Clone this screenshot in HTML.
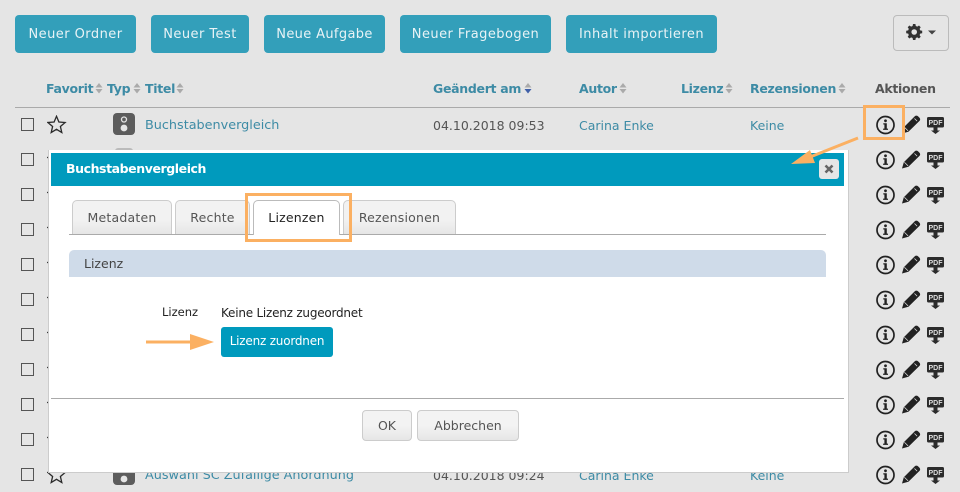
<!DOCTYPE html>
<html lang="de"><head><meta charset="utf-8"><title>Inhalte</title>
<style>
html,body{margin:0;padding:0}
body{width:960px;height:492px;background:#e5e5e5;position:relative;overflow:hidden;font-family:"DejaVu Sans","Liberation Sans",sans-serif;font-size:13px;color:#555}
.a{position:absolute;white-space:nowrap}
.btn{position:absolute;top:15px;height:38px;line-height:40px;background:#339fba;color:#e8f3f6;border-radius:4px;text-align:center;font-size:13px;letter-spacing:.45px}
.th{position:absolute;top:81px;line-height:16px;font-weight:bold;color:#3d8ba5;font-size:12.5px;letter-spacing:-.3px;white-space:nowrap}
.sort{position:absolute;top:83px}
.cb{position:absolute;left:21px;width:11px;height:11px;border:1px solid #555}
.ic{position:absolute;left:875px}
.star{position:absolute;left:47px}
.td{position:absolute;line-height:18px;white-space:nowrap;color:#3d8ba5}
.tab{position:absolute;top:200px;height:34px;line-height:34px;text-align:center;border:1px solid #ccc;border-bottom:0;border-radius:5px 5px 0 0;background:linear-gradient(#f2f2f2 55%,#e6e6e6);color:#555;box-sizing:border-box;font-size:12.5px;letter-spacing:.2px}
.mb{position:absolute;top:410px;height:31px;line-height:29px;text-align:center;box-sizing:border-box;border:1px solid #ccc;border-radius:4px;background:linear-gradient(#f3f3f3 50%,#e6e6e6);color:#555;font-size:12.5px}
</style></head><body>
<svg width="0" height="0" style="position:absolute"><defs>
<g id="acts">
<circle cx="10.500" cy="10" r="8.500" fill="none" stroke="#222" stroke-width="1.700"/>
<circle cx="10.500" cy="5.800" r="1.400" fill="#222"/>
<path d="M8.300 8.200h3.500v5.400h1.200v1.300H8.100v-1.300h1.300V9.500H8.300z" fill="#222"/>
<path d="M27 18.500l1.800-6.300L39.800 1.300c.9-.9 2.200-.9 3.200 0l1.500 1.500c.9 1 .9 2.200 0 3.100L33.400 16.800z" fill="#222"/>
<path d="M29.400 12.200l3.700 3.700M39.500 3.500l2.600 2.600" stroke="#e5e5e5" stroke-width=".7" fill="none"/>
<rect x="52" y="2" width="17" height="10.500" rx="1.500" fill="#2b2b2b"/>
<text x="60.500" y="9.800" font-family="Liberation Sans" font-size="7" font-weight="bold" fill="#ddd" text-anchor="middle">PDF</text>
<path d="M58.500 12.500h4v3h2.500L60.500 19l-4.500-3.500h2.500z" fill="#2b2b2b"/>
</g>
<path id="st" d="M9.500 1.300l2.400 5.700 6.200.5-4.700 4 1.400 6-5.300-3.200-5.300 3.200 1.400-6-4.700-4 6.200-.5z" fill="none" stroke="#2a2a2a" stroke-width="1.300"/>
<g id="srt"><path d="M4 0l3.500 4.500H.5z" fill="#aaa"/><path d="M.5 6h7L4 10.500z" fill="#aaa"/></g>
</defs></svg>

<div class="btn" style="left:15px;width:121px">Neuer Ordner</div>
<div class="btn" style="left:151px;width:98px">Neuer Test</div>
<div class="btn" style="left:264px;width:121px;letter-spacing:.35px">Neue Aufgabe</div>
<div class="btn" style="left:400px;width:151px">Neuer Fragebogen</div>
<div class="btn" style="left:566px;width:151px">Inhalt importieren</div>

<div class="a" style="left:893px;top:15px;width:54px;height:34px;border:1px solid #bbb;border-radius:4px"></div>
<svg class="a" style="left:905px;top:23px" width="34" height="18"><path d="M8 1h2.400l.4 2 1.500.6 1.700-1.100 1.700 1.700-1.100 1.700.6 1.500 2 .4v2.400l-2 .4-.6 1.500 1.100 1.700-1.700 1.700-1.700-1.100-1.500.6-.4 2H8l-.4-2-1.500-.6-1.700 1.100-1.700-1.700 1.100-1.700-.6-1.500-2-.4V7.800l2-.4.6-1.500-1.100-1.700 1.700-1.700 1.700 1.100 1.500-.6z" fill="#333"/><circle cx="9.200" cy="9" r="2.800" fill="#e5e5e5"/><path d="M23 7.500h8l-4 4z" fill="#444"/></svg>

<div class="th" style="left:46px">Favorit</div><svg class="sort" style="left:95px" width="8" height="11"><use href="#srt"/></svg>
<div class="th" style="left:107px">Typ</div><svg class="sort" style="left:133px" width="8" height="11"><use href="#srt"/></svg>
<div class="th" style="left:145px">Titel</div><svg class="sort" style="left:176px" width="8" height="11"><use href="#srt"/></svg>
<div class="th" style="left:433px">Geändert am</div><svg class="sort" style="left:524px" width="8" height="11"><path d="M4 0l3.500 4.500H.5z" fill="#aaa"/><path d="M.5 6h7L4 10.500z" fill="#3f5fa8"/></svg>
<div class="th" style="left:579px">Autor</div><svg class="sort" style="left:619px" width="8" height="11"><use href="#srt"/></svg>
<div class="th" style="left:681px">Lizenz</div><svg class="sort" style="left:725px" width="8" height="11"><use href="#srt"/></svg>
<div class="th" style="left:750px">Rezensionen</div><svg class="sort" style="left:838px" width="8" height="11"><use href="#srt"/></svg>
<div class="th" style="left:875px;color:#555">Aktionen</div>
<div class="a" style="left:15px;top:107px;width:935px;height:1px;background:#aaa"></div>

<div class="cb" style="top:118px"></div><div class="cb" style="top:153px"></div><div class="cb" style="top:188px"></div><div class="cb" style="top:223px"></div><div class="cb" style="top:258px"></div><div class="cb" style="top:293px"></div><div class="cb" style="top:328px"></div><div class="cb" style="top:363px"></div><div class="cb" style="top:398px"></div><div class="cb" style="top:433px"></div><div class="cb" style="top:468px"></div>

<svg class="star" style="top:115px" width="20" height="20"><use href="#st"/></svg>
<svg class="star" style="top:465px" width="20" height="20"><use href="#st"/></svg>
<svg class="star" style="top:150px" width="20" height="20"><use href="#st"/></svg>
<svg class="star" style="top:185px" width="20" height="20"><use href="#st"/></svg>
<svg class="star" style="top:220px" width="20" height="20"><use href="#st"/></svg>
<svg class="star" style="top:255px" width="20" height="20"><use href="#st"/></svg>
<svg class="star" style="top:290px" width="20" height="20"><use href="#st"/></svg>
<svg class="star" style="top:325px" width="20" height="20"><use href="#st"/></svg>
<svg class="star" style="top:360px" width="20" height="20"><use href="#st"/></svg>
<svg class="star" style="top:395px" width="20" height="20"><use href="#st"/></svg>
<svg class="star" style="top:430px" width="20" height="20"><use href="#st"/></svg>

<svg class="a" style="left:113px;top:113px" width="22" height="22"><rect width="22" height="22" rx="4" fill="#5c5c5c"/><circle cx="11" cy="6.500" r="2.500" fill="none" stroke="#e5e5e5" stroke-width="1.300"/><circle cx="11" cy="15" r="3.400" fill="#e5e5e5"/></svg>
<div class="a" style="left:115px;top:148px;width:18px;height:4px;background:#bbb;border-radius:3px 3px 0 0"></div>
<svg class="a" style="left:113px;top:463px" width="22" height="22"><rect width="22" height="22" rx="4" fill="#5c5c5c"/><circle cx="11" cy="16" r="3.400" fill="#e5e5e5"/></svg>

<div class="td" style="left:145px;top:117px;font-size:12.800px">Buchstabenvergleich</div>
<div class="td" style="left:433px;top:117px;color:#555;font-size:12.500px">04.10.2018 09:53</div>
<div class="td" style="left:579px;top:117px;font-size:12.500px">Carina Enke</div>
<div class="td" style="left:750px;top:117px;font-size:12.500px">Keine</div>
<div class="td" style="left:145px;top:467px;font-size:12.800px">Auswahl SC Zufällige Anordnung</div>
<div class="td" style="left:433px;top:467px;color:#555;font-size:12.500px">04.10.2018 09:24</div>
<div class="td" style="left:579px;top:467px;font-size:12.500px">Carina Enke</div>
<div class="td" style="left:750px;top:467px;font-size:12.500px">Keine</div>

<svg class="ic" style="top:115px" width="72" height="20"><use href="#acts"/></svg>
<svg class="ic" style="top:150px" width="72" height="20"><use href="#acts"/></svg>
<svg class="ic" style="top:185px" width="72" height="20"><use href="#acts"/></svg>
<svg class="ic" style="top:220px" width="72" height="20"><use href="#acts"/></svg>
<svg class="ic" style="top:255px" width="72" height="20"><use href="#acts"/></svg>
<svg class="ic" style="top:290px" width="72" height="20"><use href="#acts"/></svg>
<svg class="ic" style="top:325px" width="72" height="20"><use href="#acts"/></svg>
<svg class="ic" style="top:360px" width="72" height="20"><use href="#acts"/></svg>
<svg class="ic" style="top:395px" width="72" height="20"><use href="#acts"/></svg>
<svg class="ic" style="top:430px" width="72" height="20"><use href="#acts"/></svg>
<svg class="ic" style="top:465px" width="72" height="20"><use href="#acts"/></svg>

<!-- modal -->
<div class="a" style="left:48px;top:150px;width:799px;height:322px;background:#fff;border-left:1px solid #ccc;border-right:1px solid #ccc;border-bottom:1px solid #ccc"></div>
<div class="a" style="left:51px;top:153px;width:793px;height:33px;background:#009abd"></div>
<div class="a" style="left:66px;top:160px;color:#fff;font-weight:bold;font-size:12.500px;line-height:18px;letter-spacing:-.42px">Buchstabenvergleich</div>
<div class="a" style="left:819px;top:159px;width:20px;height:20px;background:#e6e6e6;border-radius:3px"></div>
<svg class="a" style="left:824px;top:164px" width="10" height="10"><path d="M1.500 1.500l7 7M8.500 1.500l-7 7" stroke="#666" stroke-width="2.600"/></svg>

<div class="a" style="left:69px;top:234px;width:757px;height:1px;background:#aaa"></div>
<div class="tab" style="left:72px;width:100px">Metadaten</div>
<div class="tab" style="left:175px;width:75px">Rechte</div>
<div class="tab" style="left:253px;width:87px;height:35px;background:#fff;color:#222;border-color:#bbb">Lizenzen</div>
<div class="tab" style="left:343px;width:113px">Rezensionen</div>
<div class="a" style="left:245px;top:193px;width:101px;height:43px;border:3px solid #fbb062;background:transparent"></div>

<div class="a" style="left:69px;top:250px;width:757px;height:27px;line-height:27px;background:#cfdbe9;border-radius:5px 5px 0 0;color:#444;text-indent:15px;font-size:12.500px">Lizenz</div>
<div class="a" style="left:162px;top:303px;color:#222;font-size:11.500px;line-height:18px">Lizenz</div>
<div class="a" style="left:221px;top:304px;color:#222;font-size:12px;line-height:18px;letter-spacing:-.22px">Keine Lizenz zugeordnet</div>
<div class="a" style="left:221px;top:327px;width:112px;height:30px;line-height:29px;text-align:center;background:#009abd;color:#fff;border-radius:3px;font-size:12px;letter-spacing:-.2px">Lizenz zuordnen</div>
<svg class="a" style="left:145px;top:332px" width="76" height="20"><path d="M1 10h45" stroke="#fbb062" stroke-width="3"/><path d="M45 2l24 8-24 8z" fill="#fbb062"/></svg>

<div class="a" style="left:51px;top:398px;width:793px;height:1px;background:#aaa"></div>
<div class="mb" style="left:362px;width:50px">OK</div>
<div class="mb" style="left:417px;width:102px">Abbrechen</div>

<!-- annotations -->
<div class="a" style="left:863px;top:105px;width:36px;height:29px;border:3px solid #fbb062"></div>
<svg class="a" style="left:785px;top:130px" width="80" height="40"><path d="M73 8L25 27" stroke="#fbb062" stroke-width="3"/><path d="M6 34L25 20l5 13z" fill="#fbb062"/></svg>
</body></html>
